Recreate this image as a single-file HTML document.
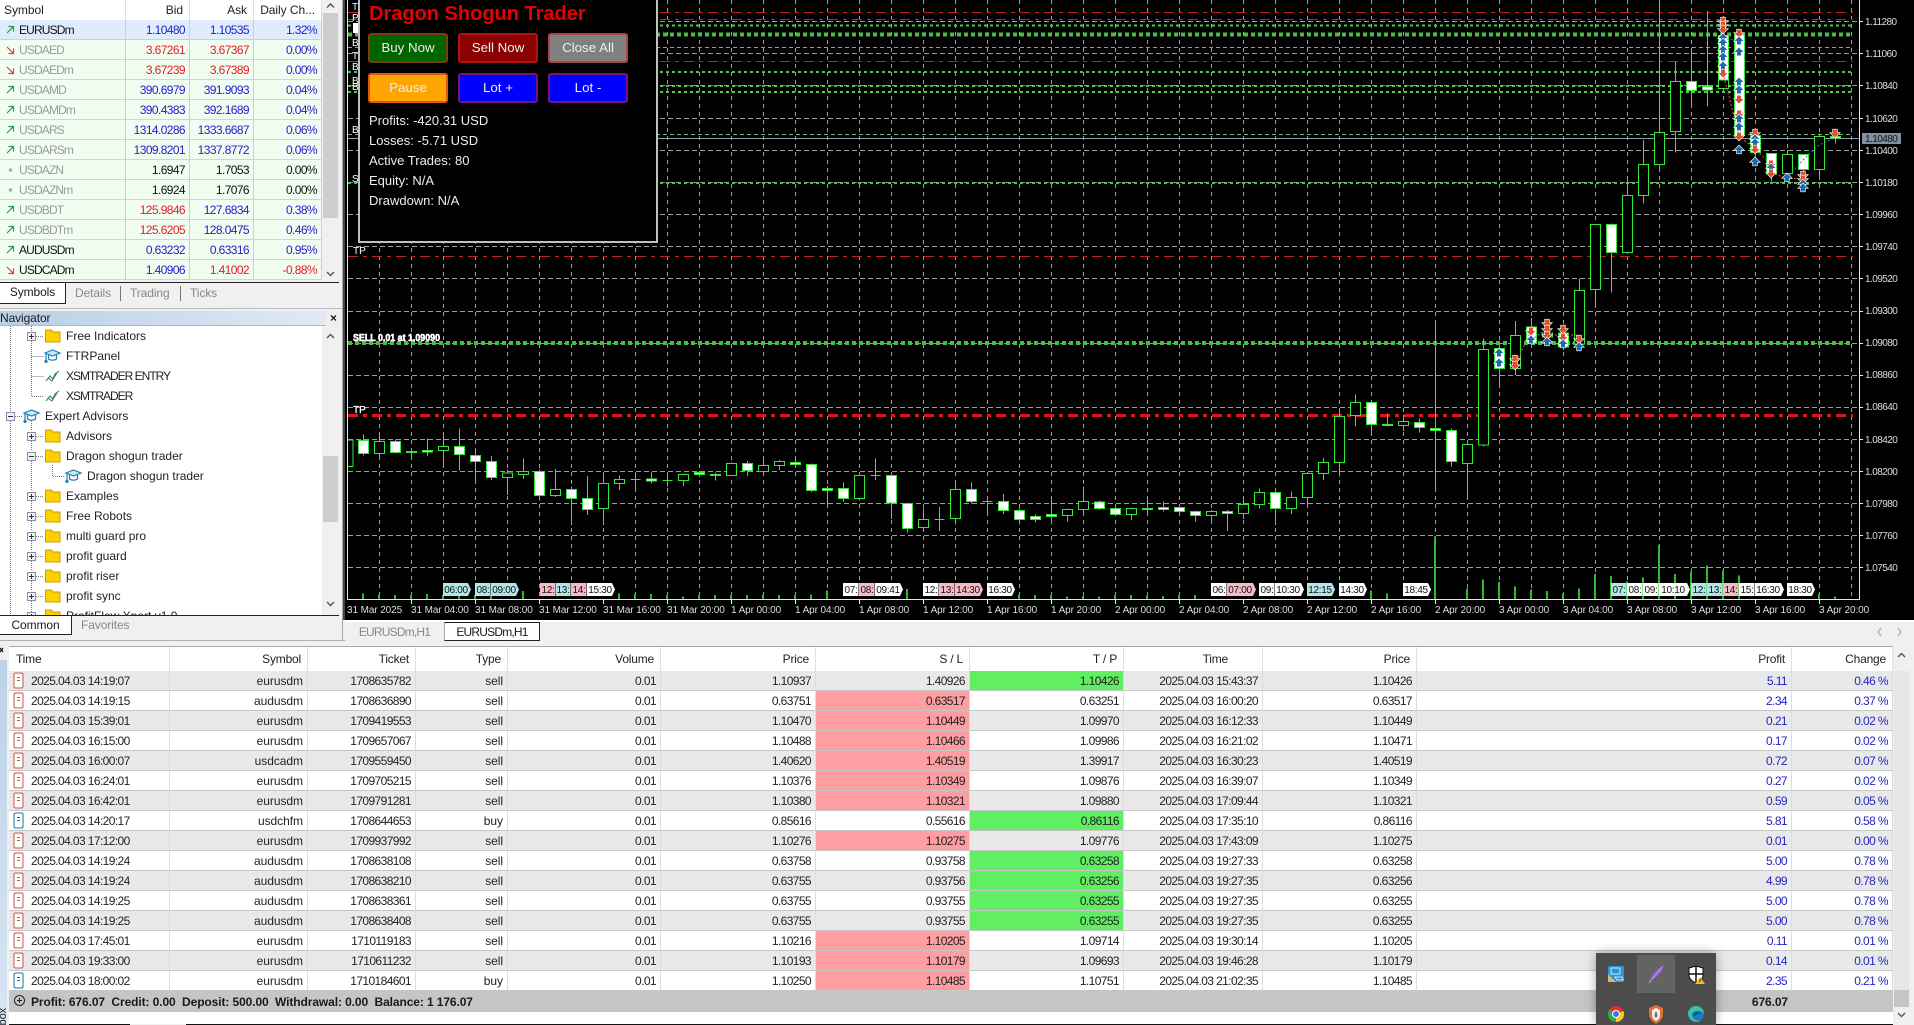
<!DOCTYPE html>
<html lang="en"><head><meta charset="utf-8"><title>Dragon Shogun Trader</title>
<style>
html,body{margin:0;padding:0;width:1914px;height:1025px;overflow:hidden;background:#f0f0f0}
body{position:relative;font:12px/16px "Liberation Sans",Arial,sans-serif;letter-spacing:-.1px;color:#1a1a1a}
.abs,.n,.b,.s,svg.top{position:absolute}
table{position:absolute;border-collapse:separate;border-spacing:0;table-layout:fixed}
td,th{padding:0 4px 0 0;text-align:right;font-weight:normal;white-space:nowrap;overflow:hidden;box-sizing:border-box;position:relative}
td{letter-spacing:-.6px}
.wl tr{height:20px}.wl td{line-height:18px;height:20px;border-bottom:1px solid #cfd6cf;border-right:1px solid #cfcfcf;background:#f1fdf0;color:#2222c8}
.wl th{height:20px;line-height:17px;background:#fff;padding-right:6px;border-right:1px solid #ddd;color:#222;letter-spacing:-.05px}
.wl td:first-child{text-align:left;padding-left:19px;color:#999;font-size:12px;letter-spacing:-.85px}
.wl td svg{position:absolute;left:3px;top:1px}
.wl tr.sel td{background:#deecfb;border-bottom-color:#c8cfd8}
.wl td.k{color:#111!important}.r{color:#e0202a!important}.h{color:#111!important}
.tt th{height:24px;line-height:24px;background:#fff;padding-right:6px;border-right:1px solid #e2e2e2;color:#222;letter-spacing:-.2px}
.tt td{height:20px;line-height:18px;background:#fff;border-bottom:1px solid #c6c6c6;border-right:1px solid #dcdcdc;color:#222}
.tt td:nth-child(2),.tt td:nth-child(4){letter-spacing:-.05px}
.tt tr.a td{background:#e9e9e9}
.tt td.l{text-align:left;padding-left:22px}
.tt td.l svg{position:absolute;left:4px;top:1px}
.tt td.p{background:#ff9ea2!important}.tt td.g{background:#62ee62!important}
.tt td.u{color:#2424c4}
.tt tr.sum td{height:21px;background:#c5c5c5;border:0;font-weight:bold;color:#1a1a1a;line-height:20px;letter-spacing:-.1px}
.tab{position:absolute;text-align:center;line-height:20px;height:20px}
.in{color:#888;font-size:12px}
.n{height:16px;line-height:16px;white-space:nowrap;font-size:12px;color:#222;letter-spacing:0}
.b{width:80px;height:30px;box-sizing:border-box;border:2px solid rgba(205,30,30,.6);border-radius:3px;color:#eee;text-align:center;line-height:26px;font-size:13.33px;letter-spacing:0}
.s{left:369px;color:#eee;font-size:13px;letter-spacing:0;line-height:20px;height:20px;white-space:nowrap}
.c path{vector-effect:non-scaling-stroke}
.w{font:10px "Liberation Sans",Arial,sans-serif;letter-spacing:-.1px;fill:#ddd}
.pr{letter-spacing:-.55px}
.lb{font:10px "Liberation Sans",Arial,sans-serif;letter-spacing:0;fill:#fff}
.pl{font:10px "Liberation Sans",Arial,sans-serif;letter-spacing:-.3px;fill:#111;text-anchor:middle}
.cy{fill:#b2e4e8}.pk{fill:#f6b9c6}.wh{fill:#fff}
</style></head><body>

<svg class="top" style="left:0;top:0" width="1914" height="620" viewBox="0 0 1914 620">
<defs>
<path id="u" d="M0-4.5 4.5 0H2V3.5H-2V0H-4.5Z" fill="#1a6cae" stroke="#fff" stroke-width="1.3" paint-order="stroke"/>
<path id="d" d="M0 4.5 4.5 0H2V-3.5H-2V0H-4.5Z" fill="#e2502a" stroke="#fff" stroke-width="1.3" paint-order="stroke"/>
</defs>
<rect x="343" y="0" width="1571" height="620" fill="#000"/>
<rect x="343" width="2" height="620" fill="#444"/>
<!-- grid -->
<path fill="none" stroke="#9c9c9c" stroke-dasharray="4 4" d="M379.5 0V599M411.5 0V599M443.5 0V599M475.5 0V599M507.5 0V599M539.5 0V599M571.5 0V599M603.5 0V599M635.5 0V599M667.5 0V599M699.5 0V599M731.5 0V599M763.5 0V599M795.5 0V599M827.5 0V599M859.5 0V599M891.5 0V599M923.5 0V599M955.5 0V599M987.5 0V599M1019.5 0V599M1051.5 0V599M1083.5 0V599M1115.5 0V599M1147.5 0V599M1179.5 0V599M1211.5 0V599M1243.5 0V599M1275.5 0V599M1307.5 0V599M1339.5 0V599M1371.5 0V599M1403.5 0V599M1435.5 0V599M1467.5 0V599M1499.5 0V599M1531.5 0V599M1563.5 0V599M1595.5 0V599M1627.5 0V599M1659.5 0V599M1691.5 0V599M1723.5 0V599M1755.5 0V599M1787.5 0V599M1819.5 0V599M1851.5 0V599"/>
<path fill="none" stroke="#9c9c9c" stroke-dasharray="5 3" d="M348 21.5H1859M348 53.5H1859M348 85.5H1859M348 118.5H1859M348 150.5H1859M348 182.5H1859M348 214.5H1859M348 246.5H1859M348 278.5H1859M348 311.5H1859M348 343.5H1859M348 375.5H1859M348 407.5H1859M348 439.5H1859M348 471.5H1859M348 503.5H1859M348 535.5H1859M348 567.5H1859"/>
<!-- level lines -->
<path fill="none" stroke="#c22020" stroke-dasharray="10 5 4 5" d="M348 12.5H1853M348 19.5H1853M348 61.5H1853M348 256.5H1853"/>
<path fill="none" stroke="#e01414" stroke-width="3" stroke-dasharray="10 5 4 5" d="M348 415.5H1853"/>
<path fill="none" stroke="#52c452" stroke-width="2" stroke-dasharray="3 3" d="M348 25.5H1853M348 72H1853M348 86H1853M348 92H1853M348 183H1853"/>
<path fill="none" stroke="#78b078" stroke-dasharray="4 3" d="M348 47.5H1853M348 134.5H1853"/>
<path fill="none" stroke="#44c044" stroke-width="4" stroke-dasharray="4 3" d="M348 34.5H1853M348 343H1853"/>
<path stroke="#8a9aaa" d="M348 138.5H1859"/>
<!-- lower candles: y = 320 + Y/3 -->
<g class="c" transform="translate(0 320) scale(1 .33333)" shape-rendering="crispEdges">
<path stroke-width="2" fill="none" stroke="#2fbb2f" d="M363 820V838M379 823V838M395 825V838M411 825V838M427 822V838M443 825V838M459 825V838M475 825V838M491 825V838M523 813V838M619 820V838M635 822V838M651 822V838M667 825V838M683 830V838M699 825V838M715 825V838M731 825V838M747 825V838M763 823V838M779 825V838M795 825V838M811 823V838M827 812V838M907 807V838M1019 823V838M1035 825V838M1051 825V838M1067 830V838M1083 828V838M1099 830V838M1115 825V838M1131 825V838M1147 826V838M1163 828V838M1179 825V838M1195 825V838M1371 812V838M1387 820V838M1435 650V838M1467 805V838M1483 778V838M1499 786V838M1515 800V838M1531 808V838M1547 813V838M1563 820V838M1579 805V838M1595 762V838M1611 768V838M1627 785V838M1643 772V838M1659 675V838M1675 762V838M1691 754V838M1707 736V838M1723 752V838M1739 766V838M1819 822V838M1835 830V838"/>
<path fill="none" stroke="#36e836" d="M363.5 343V407M379.5 337V417M395.5 358V401M411.5 385V416M427.5 355V408M443.5 337V435M459.5 325V452M475.5 392V492M491.5 408V480M507.5 450V525M523.5 415V477M539.5 448V542M555.5 447V531M571.5 500V615M587.5 468V585M603.5 463V615M619.5 466V510M635.5 462V514M651.5 456V491M667.5 463V500M683.5 460V498M699.5 453V470M715.5 458V482M731.5 428V468M747.5 423V468M763.5 408V457M779.5 420V450M795.5 408V436M811.5 430V516M827.5 498V557M843.5 487V545M859.5 464V542M875.5 415V480M891.5 461V597M907.5 547V638M923.5 565V632M939.5 561V633M955.5 481V613M971.5 487V550M987.5 530V578M1003.5 522V582M1019.5 565V614M1035.5 583V608M1051.5 532V605M1067.5 565V605M1083.5 500V578M1099.5 542V570M1115.5 562V588M1131.5 562V600M1147.5 535V582M1163.5 544V575M1179.5 560V578M1195.5 572V605M1211.5 570V600M1227.5 570V633M1243.5 535V597M1259.5 505V565M1275.5 514V615M1291.5 514V582M1307.5 458V560M1323.5 414V480M1339.5 265V470M1355.5 223V320M1371.5 246V345M1387.5 280V320M1403.5 285V333M1419.5 295V338M1435.5 0V505M1451.5 326V440M1467.5 370V528M1483.5 55V380M1499.5 85V200M1515.5 3V165M630.5 478h10M662.5 481h10M870.5 466h10M934.5 598h10M982.5 545h10"/>
<path fill="#000" stroke="#36e836" d="M348 360H353V440H348M374.5 364h10V401h-10zM438.5 379h10V392h-10zM502.5 459h10V472h-10zM518.5 455h10V464h-10zM550.5 508h10V526h-10zM598.5 490h10V566h-10zM614.5 478h10V490h-10zM678.5 463h10V482h-10zM726.5 430h10V466h-10zM758.5 436h10V455h-10zM774.5 424h10V436h-10zM854.5 466h10V536h-10zM918.5 598h10V622h-10zM950.5 509h10V595h-10zM1062.5 568h10V586h-10zM1078.5 545h10V569h-10zM1126.5 566h10V583h-10zM1206.5 574h10V586h-10zM1238.5 553h10V580h-10zM1254.5 518h10V553h-10zM1286.5 532h10V565h-10zM1302.5 460h10V532h-10zM1318.5 428h10V460h-10zM1334.5 290h10V428h-10zM1350.5 248h10V287h-10zM1398.5 305h10V317h-10zM1462.5 373h10V431h-10zM1478.5 88h10V375h-10zM1510.5 47h10V146h-10z"/>
<path fill="#fff" stroke="#36e836" d="M358.5 361h10V400h-10zM390.5 364h10V397h-10zM406.5 394h10V398h-10zM422.5 391h10V396h-10zM454.5 380h10V404h-10zM470.5 407h10V424h-10zM486.5 425h10V472h-10zM534.5 455h10V526h-10zM566.5 509h10V535h-10zM582.5 536h10V569h-10zM646.5 477h10V483h-10zM694.5 458h10V463h-10zM710.5 463h10V466h-10zM742.5 431h10V451h-10zM790.5 428h10V433h-10zM806.5 434h10V512h-10zM822.5 505h10V511h-10zM838.5 506h10V535h-10zM886.5 467h10V549h-10zM902.5 551h10V625h-10zM966.5 509h10V544h-10zM998.5 545h10V571h-10zM1014.5 572h10V598h-10zM1030.5 589h10V598h-10zM1046.5 583h10V590h-10zM1094.5 546h10V565h-10zM1110.5 566h10V583h-10zM1142.5 565h10V569h-10zM1158.5 563h10V569h-10zM1174.5 563h10V574h-10zM1190.5 575h10V586h-10zM1222.5 574h10V580h-10zM1270.5 518h10V565h-10zM1366.5 248h10V313h-10zM1382.5 313h10V317h-10zM1414.5 308h10V322h-10zM1430.5 326h10V331h-10zM1446.5 332h10V424h-10zM1494.5 85h10V145h-10z"/>
</g>
<!-- upper candles: y = Y/3 -->
<g class="c" transform="scale(1 .33333)" shape-rendering="crispEdges">
<path fill="none" stroke="#36e836" d="M1531.5 954V1035M1547.5 966V1035M1563.5 975V1050M1579.5 835V1040M1595.5 673V915M1611.5 670V878M1627.5 535V762M1643.5 420V610M1659.5 0V512M1675.5 185V458M1691.5 142V315M1707.5 33V320M1723.5 60V278M1739.5 95V415M1755.5 390V490M1771.5 460V545M1787.5 450V530M1803.5 462V540M1819.5 400V530M1835.5 405V430"/>
<path fill="#000" stroke="#36e836" d="M1542.5 999h10V1011h-10zM1574.5 871h10V1032h-10zM1590.5 673h10V868h-10zM1622.5 586h10V757h-10zM1638.5 493h10V586h-10zM1654.5 397h10V493h-10zM1670.5 244h10V394h-10zM1718.5 107h10V265h-10zM1782.5 463h10V521h-10zM1814.5 410h10V508h-10z"/>
<path fill="#fff" stroke="#36e836" d="M1526.5 981h10V1029h-10zM1558.5 999h10V1041h-10zM1606.5 673h10V757h-10zM1686.5 244h10V271h-10zM1702.5 260h10V270h-10zM1718.5 107h10V240h-10zM1734.5 105h10V407h-10zM1750.5 407h10V458h-10zM1766.5 461h10V522h-10zM1798.5 464h10V508h-10zM1830.5 409h10V414h-10z"/>
</g>
<!-- trade connectors -->
<path fill="none" stroke="#e05a3a" stroke-dasharray="2 2" d="M1515 365 1531 331M1723 73 1739 136 1755 149 1771 164M1771 173 1787 178 1803 179M1547 335H1579"/>
<path fill="none" stroke="#2a7ac0" stroke-dasharray="2 2" d="M1723 38 1739 41M1787 178 1803 160 1819 145 1835 138M1531 340 1547 329"/>
<!-- markers -->
<use href="#d" x="1723" y="21"/><use href="#d" x="1723" y="25"/><use href="#d" x="1723" y="29"/>
<use href="#u" x="1723" y="38"/><use href="#u" x="1723" y="43"/><use href="#u" x="1723" y="50"/><use href="#u" x="1723" y="57"/><use href="#u" x="1723" y="66"/><use href="#d" x="1723" y="73"/>
<use href="#d" x="1739" y="33"/><use href="#u" x="1739" y="41"/><use href="#u" x="1739" y="52"/><use href="#u" x="1739" y="82"/><use href="#u" x="1739" y="90"/><use href="#d" x="1739" y="99"/><use href="#d" x="1739" y="114"/><use href="#u" x="1739" y="119"/><use href="#u" x="1739" y="127"/><use href="#d" x="1739" y="136"/><use href="#u" x="1739" y="150"/>
<use href="#d" x="1755" y="133"/><use href="#u" x="1755" y="139"/><use href="#u" x="1755" y="143"/><use href="#d" x="1755" y="149"/><use href="#u" x="1755" y="162"/>
<use href="#d" x="1771" y="164"/><use href="#u" x="1771" y="168"/><use href="#d" x="1771" y="173"/>
<use href="#u" x="1787" y="178"/>
<use href="#d" x="1803" y="175"/><use href="#d" x="1803" y="179"/><use href="#u" x="1803" y="184"/><use href="#u" x="1803" y="188"/>
<use href="#d" x="1835" y="133"/>
<use href="#u" x="1499" y="353"/><use href="#u" x="1499" y="363"/>
<use href="#d" x="1515" y="359"/><use href="#d" x="1515" y="365"/>
<use href="#d" x="1531" y="331"/><use href="#u" x="1531" y="340"/>
<use href="#d" x="1547" y="323"/><use href="#d" x="1547" y="329"/><use href="#d" x="1547" y="335"/><use href="#u" x="1547" y="342"/>
<use href="#d" x="1563" y="329"/><use href="#d" x="1563" y="337"/><use href="#u" x="1563" y="344"/>
<use href="#d" x="1579" y="339"/><use href="#u" x="1579" y="347"/>
<!-- axes -->
<path fill="none" stroke="#e8e8e8" d="M347.5 0V599.5H1859.5V0"/>
<path fill="none" stroke="#e8e8e8" d="M1860 21.5h3M1860 53.5h3M1860 85.5h3M1860 118.5h3M1860 150.5h3M1860 182.5h3M1860 214.5h3M1860 246.5h3M1860 278.5h3M1860 311.5h3M1860 343.5h3M1860 375.5h3M1860 407.5h3M1860 439.5h3M1860 471.5h3M1860 503.5h3M1860 535.5h3M1860 567.5h3M411.5 600v4M475.5 600v4M539.5 600v4M603.5 600v4M667.5 600v4M731.5 600v4M795.5 600v4M859.5 600v4M923.5 600v4M987.5 600v4M1051.5 600v4M1115.5 600v4M1179.5 600v4M1243.5 600v4M1307.5 600v4M1371.5 600v4M1435.5 600v4M1499.5 600v4M1563.5 600v4M1627.5 600v4M1691.5 600v4M1755.5 600v4M1819.5 600v4"/>
<!-- price scale -->
<g class="w pr">
<text x="1865" y="25">1.11280</text><text x="1865" y="57">1.11060</text><text x="1865" y="89">1.10840</text><text x="1865" y="122">1.10620</text><text x="1865" y="154">1.10400</text><text x="1865" y="186">1.10180</text><text x="1865" y="218">1.09960</text><text x="1865" y="250">1.09740</text><text x="1865" y="282">1.09520</text><text x="1865" y="314">1.09300</text><text x="1865" y="346">1.09080</text><text x="1865" y="378">1.08860</text><text x="1865" y="410">1.08640</text><text x="1865" y="443">1.08420</text><text x="1865" y="475">1.08200</text><text x="1865" y="507">1.07980</text><text x="1865" y="539">1.07760</text><text x="1865" y="571">1.07540</text>
</g>
<rect x="1862" y="133" width="39" height="11" fill="#8090a0"/>
<text class="w pr" x="1865" y="142" style="fill:#111">1.10480</text>
<!-- dates -->
<g class="w">
<text x="347" y="613">31 Mar 2025</text><text x="411" y="613">31 Mar 04:00</text><text x="475" y="613">31 Mar 08:00</text><text x="539" y="613">31 Mar 12:00</text><text x="603" y="613">31 Mar 16:00</text><text x="667" y="613">31 Mar 20:00</text><text x="731" y="613">1 Apr 00:00</text><text x="795" y="613">1 Apr 04:00</text><text x="859" y="613">1 Apr 08:00</text><text x="923" y="613">1 Apr 12:00</text><text x="987" y="613">1 Apr 16:00</text><text x="1051" y="613">1 Apr 20:00</text><text x="1115" y="613">2 Apr 00:00</text><text x="1179" y="613">2 Apr 04:00</text><text x="1243" y="613">2 Apr 08:00</text><text x="1307" y="613">2 Apr 12:00</text><text x="1371" y="613">2 Apr 16:00</text><text x="1435" y="613">2 Apr 20:00</text><text x="1499" y="613">3 Apr 00:00</text><text x="1563" y="613">3 Apr 04:00</text><text x="1627" y="613">3 Apr 08:00</text><text x="1691" y="613">3 Apr 12:00</text><text x="1755" y="613">3 Apr 16:00</text><text x="1819" y="613">3 Apr 20:00</text>
</g>
<!-- chart object labels -->
<g class="lb">
<text x="352" y="10">T</text><text x="352" y="21">P</text><rect x="353" y="23" width="5" height="10" fill="#fff"/><text x="352" y="46">B</text><text x="352" y="59">T</text><text x="352" y="70">B</text><text x="352" y="84">B</text><text x="352" y="90">B</text><text x="352" y="133">B</text><text x="352" y="182">S</text>
<text x="353" y="254">TP</text><text x="353" y="413" stroke="#fff" stroke-width=".3">TP</text>
<text x="353" y="341" textLength="87" lengthAdjust="spacingAndGlyphs" font-weight="bold" stroke="#fff" stroke-width=".6">SELL 0.01 at 1.09090</text>
</g>
<!-- time pills -->
<path class="cy" d="M443 583h25l3 6.5-3 6.5h-25z"/><rect class="cy" x="475" y="583" width="15.5" height="13"/><path class="cy" d="M491 583h25l3 6.5-3 6.5h-25z"/>
<rect class="pk" x="540" y="583" width="15" height="13"/><rect class="cy" x="555.5" y="583" width="15" height="13"/><rect class="pk" x="571" y="583" width="15.5" height="13"/><path class="wh" d="M587 583h25l3 6.5-3 6.5h-25z"/>
<rect class="wh" x="843" y="583" width="15.5" height="13"/><rect class="pk" x="859" y="583" width="15.5" height="13"/><path class="wh" d="M875 583h25l3 6.5-3 6.5h-25z"/>
<rect class="wh" x="923" y="583" width="15.5" height="13"/><rect class="pk" x="939" y="583" width="15.5" height="13"/><path class="pk" d="M955 583h25l3 6.5-3 6.5h-25z"/><path class="wh" d="M987 583h25l3 6.5-3 6.5h-25z"/>
<rect class="wh" x="1211" y="583" width="15.5" height="13"/><path class="pk" d="M1227 583h26l3 6.5-3 6.5h-26z"/><rect class="wh" x="1259" y="583" width="15.5" height="13"/><path class="wh" d="M1275 583h26l3 6.5-3 6.5h-26z"/><path class="cy" d="M1307 583h25l3 6.5-3 6.5h-25z"/><path class="wh" d="M1339 583h25l3 6.5-3 6.5h-25z"/><path class="wh" d="M1403 583h25l3 6.5-3 6.5h-25z"/>
<rect class="cy" x="1611" y="583" width="15.5" height="13"/><rect class="wh" x="1627" y="583" width="15.5" height="13"/><rect class="wh" x="1643" y="583" width="15.5" height="13"/><path class="wh" d="M1659 583h28l3 6.5-3 6.5h-28z"/><rect class="cy" x="1691" y="583" width="15.5" height="13"/><rect class="cy" x="1707" y="583" width="15.5" height="13"/><rect class="pk" x="1723" y="583" width="15.5" height="13"/><rect class="wh" x="1739" y="583" width="15.5" height="13"/><path class="wh" d="M1755 583h26l3 6.5-3 6.5h-26z"/><path class="wh" d="M1787 583h25l3 6.5-3 6.5h-25z"/>
<g class="pl">
<text x="456" y="593">06:00</text><text x="483" y="593">08:</text><text x="504" y="593">09:00</text><text x="548" y="593">12:</text><text x="563" y="593">13:</text><text x="579" y="593">14:</text><text x="600" y="593">15:30</text><text x="851" y="593">07:</text><text x="867" y="593">08:</text><text x="888" y="593">09:41</text><text x="931" y="593">12:</text><text x="947" y="593">13:</text><text x="968" y="593">14:30</text><text x="1000" y="593">16:30</text><text x="1219" y="593">06:</text><text x="1240" y="593">07:00</text><text x="1267" y="593">09:</text><text x="1288" y="593">10:30</text><text x="1320" y="593">12:15</text><text x="1352" y="593">14:30</text><text x="1416" y="593">18:45</text><text x="1619" y="593">07:</text><text x="1635" y="593">08:</text><text x="1651" y="593">09:</text><text x="1673" y="593">10:10</text><text x="1699" y="593">12:</text><text x="1715" y="593">13:</text><text x="1731" y="593">14:</text><text x="1747" y="593">15:</text><text x="1768" y="593">16:30</text><text x="1800" y="593">18:30</text>
</g>
</svg>

<!-- Dragon panel -->
<div class="abs" style="left:358px;top:-3px;width:300px;height:246px;box-sizing:border-box;border:2px solid #c0c0c0;background:#000"></div>
<div class="abs" style="left:369px;top:0;height:28px;line-height:28px;font-size:20px;font-weight:bold;color:#e60000;letter-spacing:0;white-space:nowrap">Dragon Shogun Trader</div>
<div class="b" style="left:368px;top:33px;background:#006400">Buy Now</div>
<div class="b" style="left:458px;top:33px;background:#8b0000">Sell Now</div>
<div class="b" style="left:548px;top:33px;background:#808080">Close All</div>
<div class="b" style="left:368px;top:73px;background:#ffa500">Pause</div>
<div class="b" style="left:458px;top:73px;background:#0000ff">Lot +</div>
<div class="b" style="left:548px;top:73px;background:#0000ff">Lot -</div>
<div class="s" style="top:111px">Profits: -420.31 USD</div>
<div class="s" style="top:131px">Losses: -5.71 USD</div>
<div class="s" style="top:151px">Active Trades: 80</div>
<div class="s" style="top:171px">Equity: N/A</div>
<div class="s" style="top:191px">Drawdown: N/A</div>

<svg width="0" height="0" style="position:absolute">
<defs>
<path id="au" d="M4 12 10 6M5.5 5.5H10.5V10.5" fill="none" stroke="#1f9d4a" stroke-width="1.2"/>
<path id="ad" d="M4 6 10 12M5.5 12.5H10.5V7.5" fill="none" stroke="#c9483a" stroke-width="1.2"/>
<circle id="ao" cx="7.5" cy="9" r="1.8" fill="#aaa"/>
<g id="se"><rect x="1" y="1" width="9" height="15" rx="1.5" fill="#fff" stroke="#cf4f4a"/><path d="M4 5.5h3M4 8.5h3" stroke="#cf4f4a"/></g>
<g id="bu"><rect x="1" y="1" width="9" height="15" rx="1.5" fill="#fff" stroke="#1b6f9f"/><path d="M4 5.5h3M4 8.5h3" stroke="#1b6f9f"/></g>
<path id="fo" d="M.5 1h6l1.5 2h7v10H.5z" fill="#ffd000" stroke="#c9a000"/>
<g id="ca" fill="none" stroke="#1b7db8" stroke-width="1.2"><path d="M0 4 7.5 1 15 4 7.5 7z" fill="#cfe6f4"/><path d="M3.5 6v4c2 1.6 6 1.6 8 0V6"/><path d="M1 5v7" /><circle cx="1" cy="12.5" r="1" fill="#1b7db8"/></g>
<g id="ii" fill="none"><path d="M1 12 5 7 8 10 12 4" stroke="#2ba05a" stroke-width="1.2"/><path d="M3 9 7 12 10 5 14 2" stroke="#4b6b7a" stroke-width="1"/></g>
<g id="pl"><rect x=".5" y=".5" width="8" height="8" fill="#eef0f6" stroke="#8b90a4"/><path d="M2 4.5h5M4.5 2v5" stroke="#2a3050"/></g>
<g id="mi"><rect x=".5" y=".5" width="8" height="8" fill="#eef0f6" stroke="#8b90a4"/><path d="M2 4.5h5" stroke="#2a3050"/></g>
</defs>
</svg>

<!-- Market watch -->
<div class="abs" style="left:0;top:0;width:343px;height:640px;background:#f0f0f0;border-right:1px solid #a8a8a8;box-sizing:border-box"></div>
<table class="wl" style="left:0;top:0;width:322px">
<colgroup><col style="width:126px"><col style="width:64px"><col style="width:64px"><col style="width:68px"></colgroup>
<tr><th style="text-align:left;padding-left:4px">Symbol</th><th>Bid</th><th>Ask</th><th>Daily Ch...</th></tr>
<tr class="sel"><td class="k"><svg width="14" height="14"><use href="#au"/></svg>EURUSDm</td><td>1.10480</td><td>1.10535</td><td>1.32%</td></tr>
<tr><td><svg width="14" height="14"><use href="#ad"/></svg>USDAED</td><td class="r">3.67261</td><td class="r">3.67367</td><td>0.00%</td></tr>
<tr><td><svg width="14" height="14"><use href="#ad"/></svg>USDAEDm</td><td class="r">3.67239</td><td class="r">3.67389</td><td>0.00%</td></tr>
<tr><td><svg width="14" height="14"><use href="#au"/></svg>USDAMD</td><td>390.6979</td><td>391.9093</td><td>0.04%</td></tr>
<tr><td><svg width="14" height="14"><use href="#au"/></svg>USDAMDm</td><td>390.4383</td><td>392.1689</td><td>0.04%</td></tr>
<tr><td><svg width="14" height="14"><use href="#au"/></svg>USDARS</td><td>1314.0286</td><td>1333.6687</td><td>0.06%</td></tr>
<tr><td><svg width="14" height="14"><use href="#au"/></svg>USDARSm</td><td>1309.8201</td><td>1337.8772</td><td>0.06%</td></tr>
<tr><td><svg width="14" height="14"><use href="#ao"/></svg>USDAZN</td><td class="h">1.6947</td><td class="h">1.7053</td><td class="h">0.00%</td></tr>
<tr><td><svg width="14" height="14"><use href="#ao"/></svg>USDAZNm</td><td class="h">1.6924</td><td class="h">1.7076</td><td class="h">0.00%</td></tr>
<tr><td><svg width="14" height="14"><use href="#au"/></svg>USDBDT</td><td class="r">125.9846</td><td>127.6834</td><td>0.38%</td></tr>
<tr><td><svg width="14" height="14"><use href="#au"/></svg>USDBDTm</td><td class="r">125.6205</td><td>128.0475</td><td>0.46%</td></tr>
<tr><td class="k"><svg width="14" height="14"><use href="#au"/></svg>AUDUSDm</td><td>0.63232</td><td>0.63316</td><td>0.95%</td></tr>
<tr><td class="k"><svg width="14" height="14"><use href="#ad"/></svg>USDCADm</td><td>1.40906</td><td class="r">1.41002</td><td class="r">-0.88%</td></tr>
</table>
<svg class="top" style="left:322px;top:0" width="17" height="282"><rect width="17" height="282" fill="#f0f0f0"/><rect x="1" y="13" width="15" height="205" fill="#cdcdcd"/><path d="M5 7.5 8.5 4 12 7.5M5 272 8.5 275.500 12 272" fill="none" stroke="#555" stroke-width="1.4"/></svg>

<!-- market watch tabs -->
<div class="abs" style="left:0;top:282px;width:339px;height:1px;background:#222"></div>
<div class="tab" style="left:0;top:283px;width:65px;background:#fff;border-right:1px solid #222;border-bottom:1px solid #222;font-size:12px;line-height:19px">Symbols</div>
<div class="tab in" style="left:75px;top:283px">Details</div>
<div class="tab in" style="left:130px;top:283px">Trading</div>
<div class="tab in" style="left:190px;top:283px">Ticks</div>
<div class="abs" style="left:120px;top:286px;width:1px;height:15px;background:#777"></div>
<div class="abs" style="left:180px;top:286px;width:1px;height:15px;background:#777"></div>

<!-- navigator -->
<div class="abs" style="left:0;top:308px;width:342px;height:1px;background:#bbb"></div>
<div class="abs" style="left:0;top:311px;width:326px;height:14px;line-height:14px;background:linear-gradient(90deg,#b9cfe5,#dfeaf6);border-bottom:1px solid #b5b5b5;box-sizing:content-box">Navigator</div>
<div class="abs" style="left:330px;top:310px;font-weight:bold;font-size:12px">×</div>
<div class="abs" style="left:0;top:326px;width:322px;height:289px;background:#fff;overflow:hidden">
<svg style="position:absolute;left:0;top:0" width="322" height="289" viewBox="0 326 322 289">
<path fill="none" stroke="#777" stroke-dasharray="1 1" d="M10.5 326V411M10.500 421V615M31.500 326V331M31.500 341V396.500H44M36 336.500h8M31.500 356.500H44M31.500 376.500H44M15 416.500h8M31.500 421V431M31.500 441V451M31.500 461V491M31.500 501V511M31.500 521V531M31.500 541V551M31.500 561V571M31.500 581V591M31.500 601V612M36 436.500h8M36 456.500h8M36 496.500h8M36 516.500h8M36 536.500h8M36 556.500h8M36 576.500h8M36 596.500h8M52.500 465V476.500H64"/>
<use href="#pl" x="27" y="332"/><use href="#mi" x="6" y="412"/><use href="#pl" x="27" y="432"/><use href="#mi" x="27" y="452"/><use href="#pl" x="27" y="492"/><use href="#pl" x="27" y="512"/><use href="#pl" x="27" y="532"/><use href="#pl" x="27" y="552"/><use href="#pl" x="27" y="572"/><use href="#pl" x="27" y="592"/><use href="#pl" x="27" y="612"/>
<use href="#fo" x="45" y="329"/><use href="#fo" x="45" y="429"/><use href="#fo" x="45" y="449"/><use href="#fo" x="45" y="489"/><use href="#fo" x="45" y="509"/><use href="#fo" x="45" y="529"/><use href="#fo" x="45" y="549"/><use href="#fo" x="45" y="569"/><use href="#fo" x="45" y="589"/><use href="#fo" x="45" y="609"/>
<use href="#ca" x="45" y="349"/><use href="#ca" x="24" y="409"/><use href="#ca" x="66" y="469"/>
<use href="#ii" x="45" y="369"/><use href="#ii" x="45" y="389"/>
</svg>
<div class="n" style="left:66px;top:2px">Free Indicators</div>
<div class="n" style="left:66px;top:22px">FTRPanel</div>
<div class="n" style="left:66px;top:42px;letter-spacing:-1px">XSMTRADER ENTRY</div>
<div class="n" style="left:66px;top:62px;letter-spacing:-1px">XSMTRADER</div>
<div class="n" style="left:45px;top:82px">Expert Advisors</div>
<div class="n" style="left:66px;top:102px">Advisors</div>
<div class="n" style="left:66px;top:122px">Dragon shogun trader</div>
<div class="n" style="left:87px;top:142px">Dragon shogun trader</div>
<div class="n" style="left:66px;top:162px">Examples</div>
<div class="n" style="left:66px;top:182px">Free Robots</div>
<div class="n" style="left:66px;top:202px">multi guard pro</div>
<div class="n" style="left:66px;top:222px">profit guard</div>
<div class="n" style="left:66px;top:242px">profit riser</div>
<div class="n" style="left:66px;top:262px">profit sync</div>
<div class="n" style="left:66px;top:282px">ProfitFlow Xpert v1.0</div>
</div>
<svg class="top" style="left:322px;top:326px" width="17" height="289"><rect width="17" height="289" fill="#f0f0f0"/><rect x="1" y="130" width="15" height="66" fill="#cdcdcd"/><path d="M5 12 8.500 8.500 12 12M5 276 8.500 279.500 12 276" fill="none" stroke="#555" stroke-width="1.4"/></svg>
<div class="abs" style="left:0;top:615px;width:339px;height:1px;background:#222"></div>
<div class="tab" style="left:0;top:616px;width:71px;background:#fff;border-right:1px solid #222;border-bottom:1px solid #222;font-size:12px;line-height:18px;height:18px">Common</div>
<div class="tab in" style="left:81px;top:615px">Favorites</div>
<div class="abs" style="left:0;top:640px;width:345px;height:1px;background:#b0b0b0"></div>

<!-- chart tab bar -->
<div class="abs" style="left:345px;top:620px;width:1569px;height:2px;background:#fff"></div>
<div class="abs" style="left:345px;top:622px;width:1569px;height:24px;background:#f0f0f0"></div>
<div class="tab in" style="left:345px;top:622px;width:99px;line-height:20px;letter-spacing:-.8px">EURUSDm,H1</div>
<div class="tab" style="left:444px;top:622px;width:96px;height:19px;line-height:18px;font-size:12px;letter-spacing:-.8px;background:#fff;border:1px solid #222;border-top:1px solid #222;box-sizing:border-box;border-left-color:#aaa">EURUSDm,H1</div>
<svg class="top" style="left:1870px;top:625px" width="40" height="14"><path d="M11 3 8 7 11 11M28 3 31 7 28 11" fill="none" stroke="#b5b5b5" stroke-width="1.5"/></svg>
<div class="abs" style="left:0;top:641px;width:9px;height:384px;background:#f0f0f0"></div>
<div class="abs" style="left:0;top:660px;width:7px;height:365px;background:linear-gradient(180deg,#bcd2e8,#d8e5f2)"></div>
<div class="abs" style="left:9px;top:646px;width:1884px;height:1px;background:#a9a9a9"></div>
<div class="abs" style="left:9px;top:1011px;width:1884px;height:13px;background:#fff"></div>
<div class="abs" style="left:9px;top:1024px;width:121px;height:1px;background:#111"></div>
<div class="abs" style="left:186px;top:1024px;width:1724px;height:1px;background:#111"></div>
<svg class="top" style="left:0;top:645px" width="9" height="380" viewBox="0 645 9 380"><path d="M0 648 3 652M3 648 0 652" stroke="#111" stroke-width="1.2"/><text x="6" y="1008" transform="rotate(-90 6 1008)" font-family="Liberation Sans" font-size="11" fill="#222" text-anchor="end">Toolbox</text></svg>

<!-- trades -->
<table class="tt" style="left:9px;top:647px;width:1884px">
<colgroup><col style="width:161px"><col style="width:138px"><col style="width:108px"><col style="width:92px"><col style="width:153px"><col style="width:155px"><col style="width:154px"><col style="width:154px"><col style="width:139px"><col style="width:154px"><col style="width:375px"><col style="width:101px"></colgroup>
<tr><th style="text-align:left;padding-left:7px">Time</th><th>Symbol</th><th>Ticket</th><th>Type</th><th>Volume</th><th>Price</th><th>S / L</th><th>T / P</th><th style="padding-right:34px">Time</th><th>Price</th><th>Profit</th><th>Change</th></tr>
<tr class="a"><td class="l"><svg width="11" height="18"><use href="#se"/></svg>2025.04.03 14:19:07</td><td>eurusdm</td><td>1708635782</td><td>sell</td><td>0.01</td><td>1.10937</td><td>1.40926</td><td class="g">1.10426</td><td>2025.04.03 15:43:37</td><td>1.10426</td><td class="u">5.11</td><td class="u">0.46 %</td></tr>
<tr><td class="l"><svg width="11" height="18"><use href="#se"/></svg>2025.04.03 14:19:15</td><td>audusdm</td><td>1708636890</td><td>sell</td><td>0.01</td><td>0.63751</td><td class="p">0.63517</td><td>0.63251</td><td>2025.04.03 16:00:20</td><td>0.63517</td><td class="u">2.34</td><td class="u">0.37 %</td></tr>
<tr class="a"><td class="l"><svg width="11" height="18"><use href="#se"/></svg>2025.04.03 15:39:01</td><td>eurusdm</td><td>1709419553</td><td>sell</td><td>0.01</td><td>1.10470</td><td class="p">1.10449</td><td>1.09970</td><td>2025.04.03 16:12:33</td><td>1.10449</td><td class="u">0.21</td><td class="u">0.02 %</td></tr>
<tr><td class="l"><svg width="11" height="18"><use href="#se"/></svg>2025.04.03 16:15:00</td><td>eurusdm</td><td>1709657067</td><td>sell</td><td>0.01</td><td>1.10488</td><td class="p">1.10466</td><td>1.09986</td><td>2025.04.03 16:21:02</td><td>1.10471</td><td class="u">0.17</td><td class="u">0.02 %</td></tr>
<tr class="a"><td class="l"><svg width="11" height="18"><use href="#se"/></svg>2025.04.03 16:00:07</td><td>usdcadm</td><td>1709559450</td><td>sell</td><td>0.01</td><td>1.40620</td><td class="p">1.40519</td><td>1.39917</td><td>2025.04.03 16:30:23</td><td>1.40519</td><td class="u">0.72</td><td class="u">0.07 %</td></tr>
<tr><td class="l"><svg width="11" height="18"><use href="#se"/></svg>2025.04.03 16:24:01</td><td>eurusdm</td><td>1709705215</td><td>sell</td><td>0.01</td><td>1.10376</td><td class="p">1.10349</td><td>1.09876</td><td>2025.04.03 16:39:07</td><td>1.10349</td><td class="u">0.27</td><td class="u">0.02 %</td></tr>
<tr class="a"><td class="l"><svg width="11" height="18"><use href="#se"/></svg>2025.04.03 16:42:01</td><td>eurusdm</td><td>1709791281</td><td>sell</td><td>0.01</td><td>1.10380</td><td class="p">1.10321</td><td>1.09880</td><td>2025.04.03 17:09:44</td><td>1.10321</td><td class="u">0.59</td><td class="u">0.05 %</td></tr>
<tr><td class="l"><svg width="11" height="18"><use href="#bu"/></svg>2025.04.03 14:20:17</td><td>usdchfm</td><td>1708644653</td><td>buy</td><td>0.01</td><td>0.85616</td><td>0.55616</td><td class="g">0.86116</td><td>2025.04.03 17:35:10</td><td>0.86116</td><td class="u">5.81</td><td class="u">0.58 %</td></tr>
<tr class="a"><td class="l"><svg width="11" height="18"><use href="#se"/></svg>2025.04.03 17:12:00</td><td>eurusdm</td><td>1709937992</td><td>sell</td><td>0.01</td><td>1.10276</td><td class="p">1.10275</td><td>1.09776</td><td>2025.04.03 17:43:09</td><td>1.10275</td><td class="u">0.01</td><td class="u">0.00 %</td></tr>
<tr><td class="l"><svg width="11" height="18"><use href="#se"/></svg>2025.04.03 14:19:24</td><td>audusdm</td><td>1708638108</td><td>sell</td><td>0.01</td><td>0.63758</td><td>0.93758</td><td class="g">0.63258</td><td>2025.04.03 19:27:33</td><td>0.63258</td><td class="u">5.00</td><td class="u">0.78 %</td></tr>
<tr class="a"><td class="l"><svg width="11" height="18"><use href="#se"/></svg>2025.04.03 14:19:24</td><td>audusdm</td><td>1708638210</td><td>sell</td><td>0.01</td><td>0.63755</td><td>0.93756</td><td class="g">0.63256</td><td>2025.04.03 19:27:35</td><td>0.63256</td><td class="u">4.99</td><td class="u">0.78 %</td></tr>
<tr><td class="l"><svg width="11" height="18"><use href="#se"/></svg>2025.04.03 14:19:25</td><td>audusdm</td><td>1708638361</td><td>sell</td><td>0.01</td><td>0.63755</td><td>0.93755</td><td class="g">0.63255</td><td>2025.04.03 19:27:35</td><td>0.63255</td><td class="u">5.00</td><td class="u">0.78 %</td></tr>
<tr class="a"><td class="l"><svg width="11" height="18"><use href="#se"/></svg>2025.04.03 14:19:25</td><td>audusdm</td><td>1708638408</td><td>sell</td><td>0.01</td><td>0.63755</td><td>0.93755</td><td class="g">0.63255</td><td>2025.04.03 19:27:35</td><td>0.63255</td><td class="u">5.00</td><td class="u">0.78 %</td></tr>
<tr><td class="l"><svg width="11" height="18"><use href="#se"/></svg>2025.04.03 17:45:01</td><td>eurusdm</td><td>1710119183</td><td>sell</td><td>0.01</td><td>1.10216</td><td class="p">1.10205</td><td>1.09714</td><td>2025.04.03 19:30:14</td><td>1.10205</td><td class="u">0.11</td><td class="u">0.01 %</td></tr>
<tr class="a"><td class="l"><svg width="11" height="18"><use href="#se"/></svg>2025.04.03 19:33:00</td><td>eurusdm</td><td>1710611232</td><td>sell</td><td>0.01</td><td>1.10193</td><td class="p">1.10179</td><td>1.09693</td><td>2025.04.03 19:46:28</td><td>1.10179</td><td class="u">0.14</td><td class="u">0.01 %</td></tr>
<tr><td class="l"><svg width="11" height="18"><use href="#bu"/></svg>2025.04.03 18:00:02</td><td>eurusdm</td><td>1710184601</td><td>buy</td><td>0.01</td><td>1.10250</td><td class="p">1.10485</td><td>1.10751</td><td>2025.04.03 21:02:35</td><td>1.10485</td><td class="u">2.35</td><td class="u">0.21 %</td></tr>
<tr class="sum"><td colspan="10" class="l" style="overflow:visible">Profit: 676.07&nbsp; Credit: 0.00&nbsp; Deposit: 500.00&nbsp; Withdrawal: 0.00&nbsp; Balance: 1 176.07</td><td>676.07</td><td></td></tr>
</table>
<svg class="top" style="left:13px;top:994px" width="14" height="14"><circle cx="6.500" cy="6.500" r="5" fill="none" stroke="#222"/><path d="M4 6.500h5M6.500 4v5" stroke="#222"/></svg>
<svg class="top" style="left:1893px;top:647px" width="21" height="378"><rect width="21" height="378" fill="#f0f0f0"/><rect x="1" y="24" width="15" height="320" fill="#e6e6e6"/><rect x="1" y="343" width="15" height="17" fill="#c5c5c5"/><path d="M5 10 8.500 6.500 12 10M5 366 8.500 369.500 12 366" fill="none" stroke="#555" stroke-width="1.400"/></svg>

<!-- system tray popup -->
<div class="abs" style="left:1596px;top:953px;width:120px;height:72px;background:#4c4c4c;box-shadow:0 0 10px rgba(0,0,0,.35)"></div>
<div class="abs" style="left:1637px;top:955px;width:38px;height:38px;background:#636363"></div>
<svg class="top" style="left:1596px;top:953px" width="120" height="72" viewBox="1596 953 120 72">
<rect x="1608" y="966" width="16" height="16" rx="1" fill="#2b93d6"/><path d="M1608 982V974L1616 982Z" fill="#d8b870"/><rect x="1611" y="968" width="9" height="6" fill="none" stroke="#cfe8f8"/><path d="M1615 977h7l1 3h-6z" fill="none" stroke="#cfe8f8"/>
<path d="M1649 982C1652 973 1658 968 1664 965 1663 972 1657 978 1651 980Z" fill="#9160cc"/><path d="M1649 983 1662 967" stroke="#c9b0e8" stroke-width=".7"/>
<path d="M1689 968 1696 966 1703 968V975C1703 979 1699 982 1696 983 1693 982 1689 979 1689 975Z" fill="#fff" stroke="#111"/><path d="M1696 966V983M1689 974H1703" stroke="#111" stroke-width="1.500"/><path d="M1700 977 1705 984H1695Z" fill="#f4c020"/><path d="M1700 979v3" stroke="#222"/>
<circle cx="1616" cy="1014" r="8" fill="#e0342c"/><path d="M1616 1014 1609 1018A8 8 0 0 0 1616 1022L1620 1015Z" fill="#2fa84f"/><path d="M1616 1014 1623.500 1011A8 8 0 0 1 1616 1022Z" fill="#f8c81c"/><path d="M1616 1014 1609 1018A8 8 0 0 1 1609.500 1009.500Z" fill="#2fa84f"/><circle cx="1616" cy="1014" r="4" fill="#fff"/><circle cx="1616" cy="1014" r="3" fill="#3b78e0"/>
<path d="M1649 1008 1656 1005 1663 1008V1014C1663 1019 1659 1022 1656 1024 1653 1022 1649 1019 1649 1014Z" fill="#e0703a"/><path d="M1652 1010 1656 1008 1660 1010V1015C1660 1018 1658 1020 1656 1021 1654 1020 1652 1018 1652 1015Z" fill="#f4f0ea"/><path d="M1656 1011C1658 1014 1658 1017 1656 1018 1654 1017 1654 1014 1656 1011Z" fill="#777"/>
<circle cx="1696" cy="1014" r="8" fill="#1a7fc0"/><path d="M1688 1014A8 8 0 0 1 1704 1014C1702 1010 1694 1009 1692 1014 1691 1018 1695 1021 1700 1021 1697 1023 1690 1022 1688 1014Z" fill="#3cc6a0"/><path d="M1693 1015C1694 1011 1700 1011 1701 1014 1699 1013 1696 1014 1696 1016Z" fill="#0c4f8a"/>
</svg>
</body></html>
